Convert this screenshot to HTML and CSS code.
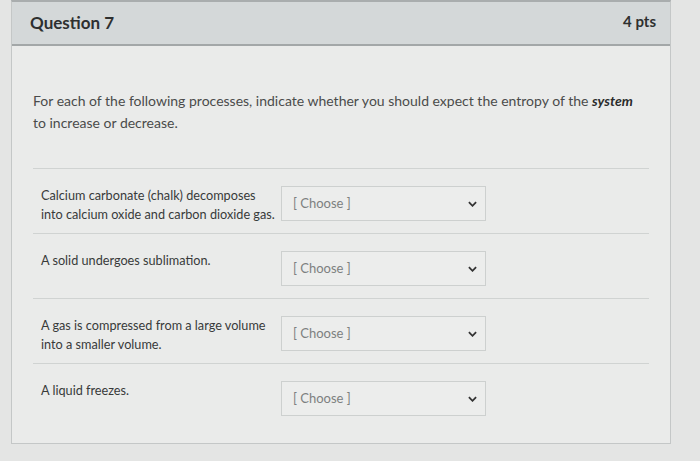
FILE: index.html
```html
<!DOCTYPE html>
<html>
<head>
<meta charset="utf-8">
<link rel="stylesheet" href="styles.css">
</head>
<body>
<div class="page">
  <div class="card">
    <div class="header">
      <span class="title">Question 7</span>
      <span class="pts">4 pts</span>
    </div>
    <div class="body">
      <p class="prompt">For each of the following processes, indicate whether you should expect the entropy of the <b><i>system</i></b> to increase or decrease.</p>
      <div class="rows">
        <div class="row">
          <div class="label">Calcium carbonate (chalk) decomposes into calcium oxide and carbon dioxide gas.</div>
          <div class="select"><span>[ Choose ]</span><svg class="chev" viewBox="0 0 10 6" width="9" height="6"><path d="M1 1l4 4 4-4" fill="none" stroke="#333" stroke-width="2"/></svg></div>
        </div>
        <div class="row">
          <div class="label">A solid undergoes sublimation.</div>
          <div class="select"><span>[ Choose ]</span><svg class="chev" viewBox="0 0 10 6" width="9" height="6"><path d="M1 1l4 4 4-4" fill="none" stroke="#333" stroke-width="2"/></svg></div>
        </div>
        <div class="row">
          <div class="label">A gas is compressed from a large volume into a smaller volume.</div>
          <div class="select"><span>[ Choose ]</span><svg class="chev" viewBox="0 0 10 6" width="9" height="6"><path d="M1 1l4 4 4-4" fill="none" stroke="#333" stroke-width="2"/></svg></div>
        </div>
        <div class="row last">
          <div class="label">A liquid freezes.</div>
          <div class="select"><span>[ Choose ]</span><svg class="chev" viewBox="0 0 10 6" width="9" height="6"><path d="M1 1l4 4 4-4" fill="none" stroke="#333" stroke-width="2"/></svg></div>
        </div>
      </div>
    </div>
  </div>
</div>
</body>
</html>
```

FILE: styles.css
```css
html, body {
  margin: 0;
  padding: 0;
  background: #e4e5e4;
  width: 700px;
  height: 461px;
  overflow: hidden;
}
.page {
  padding-left: 11px;
  width: 700px;
  box-sizing: border-box;
  font-family: Lato, "Open Sans", sans-serif;
  color: #3a3b3b;
}
.card {
  width: 660px;
  height: 444px;
  box-sizing: border-box;
  background: #eaebea;
  border: 1px solid #c4c7c7;
  border-top: 2px solid #a9adae;
}
.header {
  height: 42px;
  background: #d4d8d9;
  border-bottom: 2px solid #a3a7a8;
  display: flex;
  align-items: center;
  justify-content: space-between;
  padding: 0 14px 0 18px;
}
.title {
  font-weight: 700;
  font-size: 17px;
  color: #2e3030;
  margin-top: -2px;
}
.pts {
  font-weight: 700;
  font-size: 15px;
  color: #2e3030;
  margin-top: -4px;
}
.body {
  padding: 44px 21px 0 21px;
}
.prompt {
  margin: 0;
  font-size: 14px;
  line-height: 22px;
  color: #4a4b4b;
  padding: 0 8px 34px 0;
  border-bottom: 1px solid #d0d3d2;
}
.prompt b {
  color: #2a2b2b;
}
.row {
  display: flex;
  align-items: flex-start;
  height: 65px;
  box-sizing: border-box;
  padding: 17px 0 0 8px;
  border-bottom: 1px solid #d0d3d2;
}
.row.last {
  border-bottom: none;
}
.label {
  width: 234px;
  margin-right: 6px;
  font-size: 12.7px;
  line-height: 19px;
  color: #383a3a;
}
.select {
  width: 205px;
  height: 35px;
  box-sizing: border-box;
  border: 1px solid #cdd0cf;
  background: #ecedec;
  display: flex;
  align-items: center;
  justify-content: space-between;
  padding: 0 8px 0 11px;
  font-size: 13px;
  color: #7d8080;
}
.select span {
  margin-top: -2px;
}
```
